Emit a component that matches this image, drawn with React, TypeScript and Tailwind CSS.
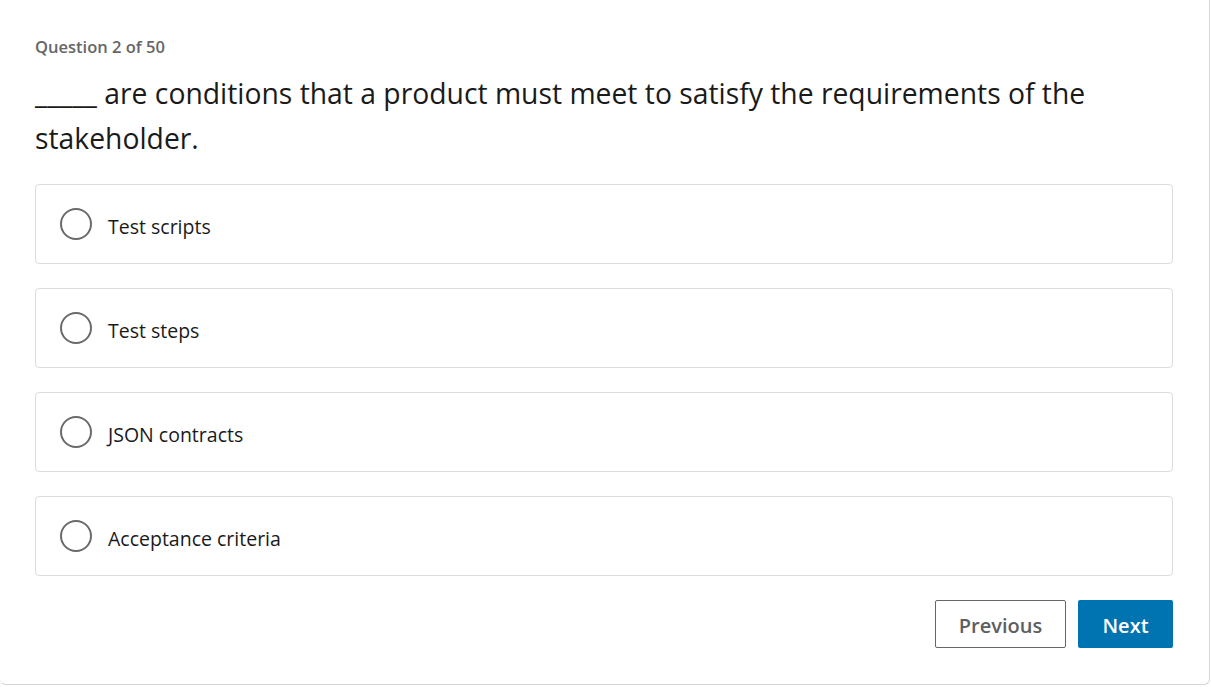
const options = ["Test scripts", "Test steps", "JSON contracts", "Acceptance criteria"]

function Option({ label }: { label: string }) {
  return (
    <label className="flex h-[80px] items-center rounded-[4px] border border-[#dcdcdc] bg-white pl-[24px]">
      <span className="h-[32px] w-[32px] shrink-0 rounded-full border-2 border-[#6b6b6b]" />
      <span className="ml-[16px] pt-[5px] text-[19.5px] text-[#1a1a1a]">{label}</span>
    </label>
  )
}

export default function App() {
  return (
    <div
      className="h-[687px] w-[1211px] bg-white"
      style={{ fontFamily: '"Open Sans", "Noto Sans", sans-serif' }}
    >
      <div className="h-[685px] w-[1210px] rounded-b-[6px] border-r border-b border-[#d6d6d6] px-[35px] pt-[35px]">
        <div className="text-[16.5px] leading-[24px] font-semibold text-[#666666]">Question 2 of 50</div>
        <h1 className="mt-[12px] max-w-[1100px] text-[28.3px] leading-[45px] text-[#1a1a1a]">
          _____ are conditions that a product must meet to satisfy the requirements of the stakeholder.
        </h1>
        <div className="mt-[23px] flex w-[1138px] flex-col gap-[24px]">
          {options.map((o) => (
            <Option key={o} label={o} />
          ))}
        </div>
        <div className="mt-[24px] flex w-[1138px] justify-end gap-[12px]">
          <button className="h-[48px] w-[131px] rounded-[2px] border border-[#666] bg-white pt-[3px] text-[20px] font-semibold text-[#5e5e5e]">
            Previous
          </button>
          <button className="h-[48px] w-[95px] rounded-[2px] bg-[#0073b1] pt-[3px] text-[20px] font-semibold text-white">
            Next
          </button>
        </div>
      </div>
    </div>
  )
}
